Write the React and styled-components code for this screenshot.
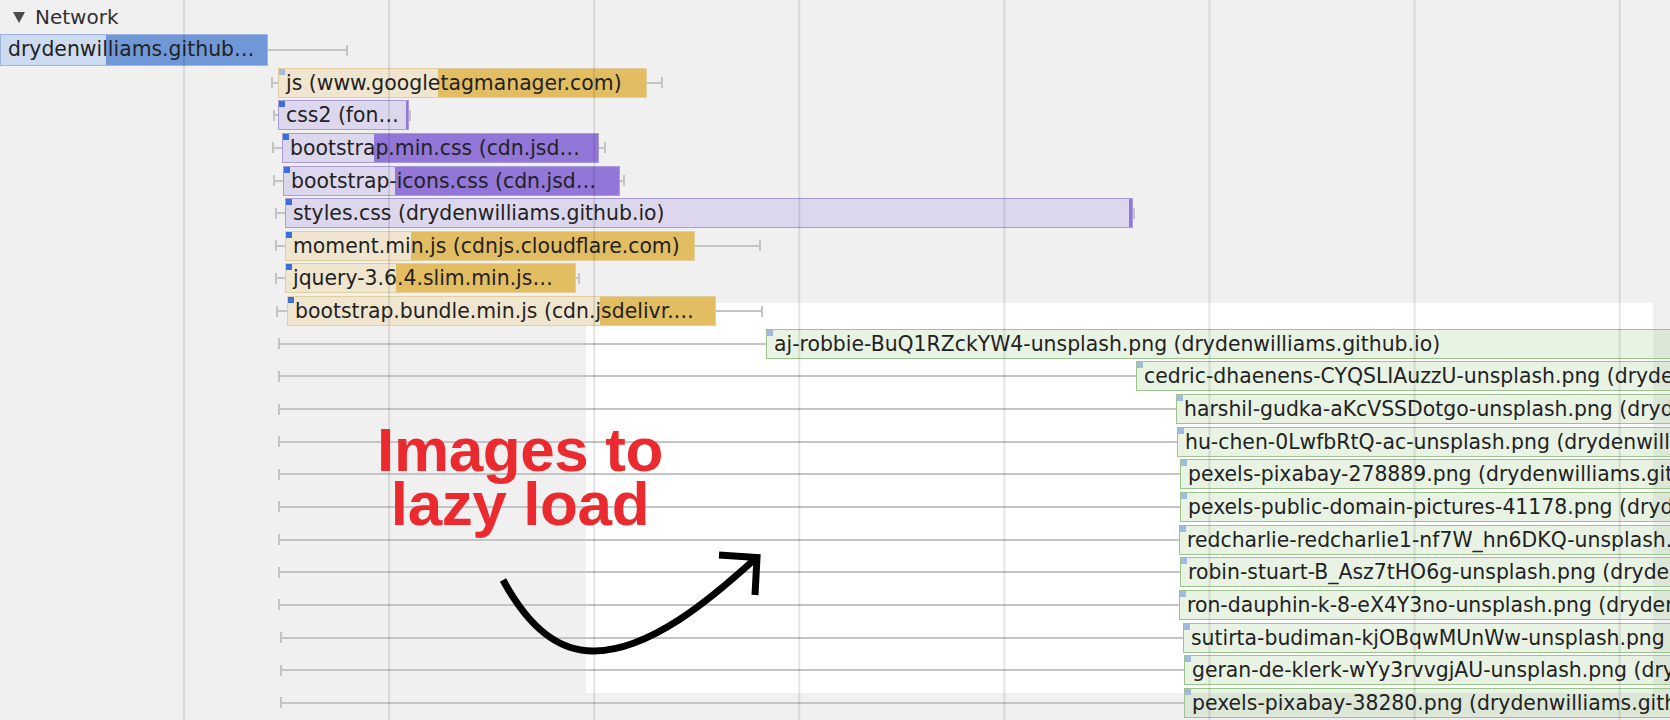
import React from "react";
import styled, { createGlobalStyle } from "styled-components";

const ROW_H = 32.65;

const GlobalStyle = createGlobalStyle`
  html, body {
    margin: 0;
    padding: 0;
    background: #f0f0f0;
  }
  body {
    font-family: "DejaVu Sans", "Liberation Sans", sans-serif;
  }
`;

const COLORS = {
  doc: { light: "#cddbf0", border: "#9db5e0", dark: "#7098d7", marker: "transparent" },
  script: { light: "#f0e6cf", border: "#e2cf9f", dark: "#e2bd62", marker: "#3c6fd8" },
  css: { light: "#dcd7ec", border: "#a99bd9", dark: "#9276d8", marker: "#3c6fd8" },
  img: { light: "rgba(120, 185, 95, 0.17)", border: "#9cc48e", dark: "#9cc48e", marker: "#9fbbe0" },
};

const rows = [
  { type: "doc", bar: 0, dark: 105, end: 268, whisker: 348, text: "drydenwilliams.github…" },
  { type: "script", tick: 271, bar: 278, dark: 437, end: 647, whisker: 663, text: "js (www.googletagmanager.com)", marker: "#a6bbd9" },
  { type: "css", tick: 273, bar: 278, dark: 405, end: 409, whisker: 411, text: "css2 (fon…" },
  { type: "css", tick: 272, bar: 282, dark: 373, end: 599, whisker: 606, text: "bootstrap.min.css (cdn.jsd…" },
  { type: "css", tick: 273, bar: 283, dark: 394, end: 620, whisker: 625, text: "bootstrap-icons.css (cdn.jsd…" },
  { type: "css", tick: 275, bar: 285, dark: 1128, end: 1133, whisker: 1135, text: "styles.css (drydenwilliams.github.io)" },
  { type: "script", tick: 275, bar: 285, dark: 410, end: 695, whisker: 761, text: "moment.min.js (cdnjs.cloudflare.com)" },
  { type: "script", tick: 275, bar: 285, dark: 395, end: 576, whisker: 580, text: "jquery-3.6.4.slim.min.js…" },
  { type: "script", tick: 276, bar: 287, dark: 599, end: 716, whisker: 763, text: "bootstrap.bundle.min.js (cdn.jsdelivr.…" },
  { type: "img", tick: 278, bar: 766, text: "aj-robbie-BuQ1RZckYW4-unsplash.png (drydenwilliams.github.io)" },
  { type: "img", tick: 278, bar: 1136, text: "cedric-dhaenens-CYQSLIAuzzU-unsplash.png (drydenwilliams.github.io)" },
  { type: "img", tick: 278, bar: 1176, text: "harshil-gudka-aKcVSSDotgo-unsplash.png (drydenwilliams.github.io)" },
  { type: "img", tick: 278, bar: 1177, text: "hu-chen-0LwfbRtQ-ac-unsplash.png (drydenwilliams.github.io)" },
  { type: "img", tick: 278, bar: 1180, text: "pexels-pixabay-278889.png (drydenwilliams.github.io)" },
  { type: "img", tick: 278, bar: 1180, text: "pexels-public-domain-pictures-41178.png (drydenwilliams.github.io)" },
  { type: "img", tick: 278, bar: 1179, text: "redcharlie-redcharlie1-nf7W_hn6DKQ-unsplash.png (drydenwilliams.github.io)" },
  { type: "img", tick: 278, bar: 1180, text: "robin-stuart-B_Asz7tHO6g-unsplash.png (drydenwilliams.github.io)" },
  { type: "img", tick: 278, bar: 1179, text: "ron-dauphin-k-8-eX4Y3no-unsplash.png (drydenwilliams.github.io)" },
  { type: "img", tick: 280, bar: 1183, text: "sutirta-budiman-kjOBqwMUnWw-unsplash.png (drydenwilliams.github.io)" },
  { type: "img", tick: 280, bar: 1184, text: "geran-de-klerk-wYy3rvvgjAU-unsplash.png (drydenwilliams.github.io)" },
  { type: "img", tick: 280, bar: 1184, text: "pexels-pixabay-38280.png (drydenwilliams.github.io)" },
  { type: "img", tick: 280, bar: 1184, text: "pexels-pixabay-356079.png (drydenwilliams.github.io)" },
];

const Panel = styled.div`
  position: relative;
  width: 1670px;
  height: 720px;
  overflow: hidden;
  background: #f0f0f0;
`;

// white highlight painted behind the image requests
const Highlight = styled.div`
  position: absolute;
  left: 586px;
  top: 303px;
  width: 1067px;
  height: 390px;
  background: #ffffff;
`;

const Timeline = styled.div`
  position: relative;
  z-index: 1;
  display: flex;
  flex-direction: column;
`;

const Header = styled.div`
  display: flex;
  align-items: center;
  gap: 10px;
  height: 33.7px;
  padding-left: 13px;
  box-sizing: border-box;
  font-size: 20px;
  color: #303030;
`;

const Caret = styled.span`
  width: 0;
  height: 0;
  border-left: 6px solid transparent;
  border-right: 6px solid transparent;
  border-top: 11px solid #4a4a4a;
  margin-top: 1px;
`;

const Row = styled.div`
  display: flex;
  align-items: center;
  height: ${ROW_H}px;
  flex-shrink: 0;
  white-space: nowrap;
`;

const Spacer = styled.div`
  flex-shrink: 0;
`;

const Whisker = styled.div`
  flex-shrink: 0;
  height: 11px;
  box-sizing: border-box;
  border-${(p) => p.$side}: 2px solid #c4c4c4;
  background: linear-gradient(#c4c4c4, #c4c4c4) center / 100% 2px no-repeat;
`;

const Bar = styled.div`
  position: relative;
  flex-shrink: 0;
  box-sizing: border-box;
  height: ${(p) => (p.$type === "doc" ? 32 : 30)}px;
  border: 1px solid ${(p) => COLORS[p.$type].border};
  background: linear-gradient(
    to right,
    ${(p) => COLORS[p.$type].light} 0 ${(p) => p.$split}px,
    ${(p) => COLORS[p.$type].dark} ${(p) => p.$split}px
  );
  padding-left: 7px;
  font-size: 20.4px;
  line-height: 28px;
  color: #222;
  overflow: hidden;

  &::before {
    content: "";
    position: absolute;
    left: 0;
    top: 0;
    width: 6px;
    height: 6px;
    background: ${(p) => p.$marker || COLORS[p.$type].marker};
  }
`;

const Grid = styled.div`
  position: absolute;
  inset: 0;
  z-index: 2;
  pointer-events: none;
  background-image: linear-gradient(to right, rgba(0, 0, 0, 0.1) 0 2px, transparent 2px);
  background-size: 205.1px 100%;
  background-position: 183px 0;
`;

const Note = styled.div`
  position: absolute;
  z-index: 3;
  left: 320px;
  top: 423px;
  width: 400px;
  text-align: center;
  font-family: "Liberation Sans", Arial, sans-serif;
  font-weight: 700;
  font-size: 62px;
  line-height: 54px;
  letter-spacing: -0.4px;
  color: #ea2a2e;
`;

const Arrow = styled.svg`
  position: absolute;
  z-index: 3;
  left: 480px;
  top: 530px;
  width: 300px;
  height: 140px;
  overflow: visible;
`;

function RequestRow({ r }) {
  const end = r.end ?? 2100;
  const split = (r.dark ?? end) - r.bar;
  return (
    <Row>
      <Spacer style={{ width: r.tick ?? r.bar }} />
      {r.tick != null && <Whisker $side="left" style={{ width: r.bar - r.tick }} />}
      <Bar $type={r.type} $split={split} $marker={r.marker} style={{ width: end - r.bar }}>
        {r.text}
      </Bar>
      {r.whisker != null && <Whisker $side="right" style={{ width: r.whisker - end }} />}
    </Row>
  );
}

export default function App() {
  return (
    <>
      <GlobalStyle />
      <Panel>
        <Highlight />
        <Timeline>
          <Header>
            <Caret />
            <span>Network</span>
          </Header>
          {rows.map((r, i) => (
            <RequestRow key={i} r={r} />
          ))}
        </Timeline>
        <Grid />
        <Note>
          Images to
          <br />
          lazy load
        </Note>
        <Arrow viewBox="480 530 300 140">
          <path
            d="M503 580 C 530 630, 560 652, 595 651 C 650 650, 710 600, 756 558"
            fill="none"
            stroke="#000"
            strokeWidth="7"
          />
          <path d="M719 555 L757 557.5 L755 595" fill="none" stroke="#000" strokeWidth="7" strokeLinejoin="miter" />
        </Arrow>
      </Panel>
    </>
  );
}
